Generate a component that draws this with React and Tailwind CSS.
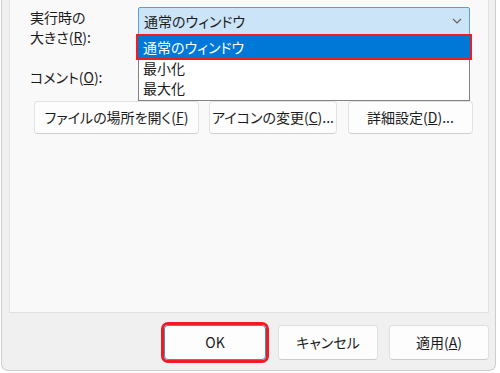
const Chevron = () => (
  <svg width="10" height="6" viewBox="0 0 10 6" fill="none">
    <path d="M1 1l4 4 4-4" stroke="#5f5f5f" strokeWidth="1.1" />
  </svg>
);

const btn =
  "h-[33px] bg-[#fdfdfd] border border-[#e2e2e2] border-b-[#cfcfcf] rounded-[4px] flex items-center justify-center text-[14px] text-[#1b1b1b]";

const bottomBtn =
  "w-[100px] h-[35px] bg-[#fdfdfd] border border-[#e0e0e0] border-b-[#cccccc] rounded-[4px] flex items-center justify-center text-[14px] text-[#1b1b1b]";

export default function App() {
  return (
    <div className="w-[500px] h-[373px] bg-white overflow-hidden font-['Noto_Sans_CJK_JP',sans-serif] [font-feature-settings:'palt'] text-[#1b1b1b]">
      <div className="ml-px w-[495px] h-[371px] bg-[#f0f0f0] border-l border-r border-b border-[#cdcdcd] rounded-b-[7px] flex flex-col">
        {/* tab page */}
        <div className="relative ml-[7px] w-[480px] h-[313px] bg-[#f9f9f9] border-l border-r border-b border-[#e1e1e1]">
          <div className="flex pt-[7px] pl-[20px]">
            <div className="w-[108px] text-[14px] leading-[20px]">
              <div>実行時の</div>
              <div>
                大きさ(<span className="underline">R</span>):
              </div>
            </div>
            <div className="w-[332px] h-[28px] bg-[#cce4f7] border border-[#5c9ad8] rounded-t-[2px] flex items-center justify-between pl-[5px] pr-[7px] text-[14px]">
              <span>通常のウィンドウ</span>
              <Chevron />
            </div>
          </div>
          <div className="pl-[20px] mt-[20px] text-[14px] leading-[20px]">
            コメント(<span className="underline">O</span>):
          </div>
          <div className="flex pl-[24px] mt-[14px] gap-[10px]">
            <div className={`${btn} w-[165px]`}>
              ファイルの場所を開く(<span className="underline">F</span>)
            </div>
            <div className={`${btn} w-[128px]`}>
              アイコンの変更(<span className="underline">C</span>)...
            </div>
            <div className={`${btn} w-[125px] ml-px`}>
              詳細設定(<span className="underline">D</span>)...
            </div>
          </div>

          {/* open dropdown list */}
          <div className="absolute left-[128px] top-[36px] w-[332px] h-[65px] bg-white border border-[#828282] border-t-0 text-[14px] flex flex-col">
            <div className="h-[22px] -mx-px bg-[#0078d7] text-white flex items-center pl-[5px] outline-2 outline-[#ee1c25]">
              通常のウィンドウ
            </div>
            <div className="h-[20px] flex items-center pl-[4px]">最小化</div>
            <div className="h-[20px] flex items-center pl-[4px]">最大化</div>
          </div>
        </div>

        {/* dialog buttons */}
        <div className="flex mt-[12px] items-start">
          <div className="ml-[162px] w-[102px] h-[35px] bg-[#fdfdfd] border border-[#3c8fd9] rounded-[4px] flex items-center justify-center text-[14px] outline-3 outline-[#ee1c25]">
            OK
          </div>
          <div className={`${bottomBtn} ml-[12px]`}>キャンセル</div>
          <div className={`${bottomBtn} ml-[11px]`}>
            適用(<span className="underline">A</span>)
          </div>
        </div>
      </div>
    </div>
  );
}
